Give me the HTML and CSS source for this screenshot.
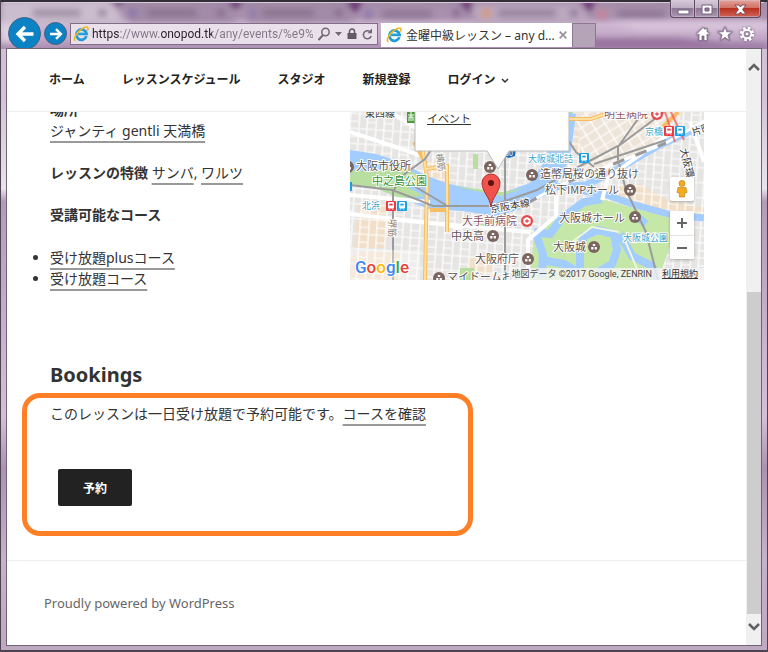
FILE: index.html
```html
<!DOCTYPE html>
<html lang="ja">
<head>
<meta charset="utf-8">
<meta name="viewport" content="width=device-width, initial-scale=1">
<title>金曜中級レッスン – any d...</title>
<link rel="stylesheet" href="styles.css">
</head>
<body>
<svg class="symbols" aria-hidden="true">
  <symbol id="ie" viewBox="0 0 16 16">
    <path d="M13.4 10.2A5.2 5.2 0 1 1 13.6 7.9H5.1" fill="none" stroke="#239bd9" stroke-width="2.7"/>
    <path d="M5 6.6h6.4" stroke="#8bd5f5" stroke-width="1"/>
    <path d="M2.6 14.6C.2 14.5 1.5 9.6 5.5 5.6S14 .2 14.8 1.6c.5.8.2 2-.4 3.1" fill="none" stroke="#f2b71c" stroke-width="1.6"/>
  </symbol>
  <symbol id="train" viewBox="0 0 10 10">
    <rect width="10" height="10" rx="1"/>
    <path d="M2.5 1.5h5v5.5h-5zM3 8.7l1-1.3M7 8.7L6 7.4" fill="#fff" stroke="#fff"/>
    <path d="M3.3 2.7h3.4v1.8H3.3z"/>
  </symbol>
  <symbol id="poi" viewBox="0 0 12 12">
    <circle cx="6" cy="6" r="6" fill="#7b665f"/>
    <path d="M6 2.6v2.6M3.2 6h2.2v2.4H3.2zM6.7 6h2.2v2.4H6.7zM4.8 3h2.4v2H4.8z" fill="#fff"/>
  </symbol>
  <symbol id="hospital" viewBox="0 0 12 12">
    <circle cx="6" cy="6" r="6" fill="#e5484d"/>
    <path d="M6 2l3.6 2v4L6 10 2.4 8V4z" fill="#fff"/>
    <path d="M6 4.2v3.6M4.2 6h3.6" stroke="#e5484d" stroke-width="1.3"/>
  </symbol>
</svg>

<div class="window">
  <svg class="glass" viewBox="0 0 768 49" preserveAspectRatio="none" aria-hidden="true">
    <defs>
      <filter id="soft"><feGaussianBlur stdDeviation="3"/></filter>
      <linearGradient id="glass-fill" x2="0" y2="1">
        <stop offset="0" stop-color="#a48ba9"/><stop offset=".35" stop-color="#ab93b0"/>
        <stop offset=".5" stop-color="#cdb6d0"/><stop offset=".78" stop-color="#c3a9c7"/><stop offset="1" stop-color="#a98db0"/>
      </linearGradient>
    </defs>
    <rect width="768" height="49" fill="url(#glass-fill)"/>
    <g filter="url(#soft)">
      <path d="M0 0h112l12 24H0z" fill="#cbbdce"/>
      <path d="M120 0h108l8 22H130zM240 0h104l10 22H248z" fill="#a28ba7"/>
      <path d="M468 4h112l12 20H478z" fill="#bba7bf"/>
      <path d="M108 0h16l-7 8zM226 0h18l-9 10zM345 0h18l-8 14zM459 0h14l-2 15zM580 0h16l-6 13z" fill="#68336f"/>
      <path d="M32 13h48M146 13h50M262 13h52M382 14h50M498 13h58M618 14h48" stroke="#6f5b76" stroke-width="7" opacity=".5"/>
      <path d="M98 13h7M217 13h7M335 13h7M453 13h7M571 13h7" stroke="#735780" stroke-width="5"/>
      <path d="M128 13h8M250 14h5M365 14h7" stroke="#8873ac" stroke-width="8"/>
      <path d="M482 13h9" stroke="#dc9561" stroke-width="7"/>
      <path d="M598 14h9" stroke="#c98494" stroke-width="9"/>
      <path d="M580 38h100l50 6h38v5H570z" fill="#98729f"/>
      <path d="M640 30h128v-8H610z" fill="#d8c4db"/>
      <path d="M0 24h20v18H0z" fill="#ded2e1"/>
    </g>
    <path d="M0 1h768" stroke="#332d38" stroke-width="2"/>
    <path d="M3 2.500h762" stroke="#d8cbdc"/>
  </svg>

  <header class="chrome">
    <div class="caption">
      <button type="button" aria-label="最小化"><svg viewBox="0 0 24 16"><path d="M7 9h11v4H7z" fill="#fff" stroke="#70617a"/></svg></button>
      <button type="button" aria-label="最大化"><svg viewBox="0 0 24 16"><path d="M7 4h10v9H7zM10 7h4v3h-4z" fill="#fff" fill-rule="evenodd" stroke="#70617a"/></svg></button>
      <button type="button" class="close" aria-label="閉じる"><svg viewBox="0 0 24 16"><path d="M7 4h4l1.500 2L14 4h4l-3.500 4.500L18 13h-4l-1.500-2-1.500 2H7l3.500-4.500z" fill="#fff" stroke="#7b4c52"/></svg></button>
    </div>
    <div class="toolbar">
      <button type="button" class="round back" aria-label="戻る"><svg viewBox="0 0 20 20"><path d="M18.500 10H3.500M10 3L3 10l7 7" fill="none" stroke="#fff" stroke-width="3.400"/></svg></button>
      <button type="button" class="round forward" aria-label="進む"><svg viewBox="0 0 20 20"><path d="M1.500 10h15M10 3l7 7-7 7" fill="none" stroke="#fff" stroke-width="3.400"/></svg></button>
      <div class="address">
        <svg class="ie" aria-hidden="true"><use href="#ie"/></svg>
        <input type="text" aria-label="アドレス" value="https://www.onopod.tk/any/events/%e9%8">
        <button type="button" aria-label="検索"><svg width="12" height="14" viewBox="0 0 12 14"><circle cx="7.500" cy="5" r="3.700" fill="none" stroke="#716878" stroke-width="1.500"/><path d="M5 8l-4.500 5" stroke="#716878" stroke-width="2"/></svg></button>
        <button type="button" aria-label="候補"><svg width="7" height="4" viewBox="0 0 7 4"><path d="M0 0h7L3.500 4z" fill="#716878"/></svg></button>
        <svg width="10" height="12" viewBox="0 0 10 12" role="img" aria-label="安全"><path d="M.5 5h9v6h-9z" fill="#625b67"/><path d="M2.500 6V3.500a2.500 2.500 0 0 1 5 0V6" fill="none" stroke="#625b67" stroke-width="1.500"/></svg>
        <button type="button" aria-label="更新"><svg width="11" height="12" viewBox="0 0 11 12"><path d="M9 5a4 4 0 1 0 .2 3" fill="none" stroke="#716878" stroke-width="1.600"/><path d="M5.500 5.200H10V.5z" fill="#716878"/></svg></button>
      </div>
      <div class="tab">
        <svg class="ie" aria-hidden="true"><use href="#ie"/></svg>
        <span>金曜中級レッスン – any d...</span>
        <button type="button" aria-label="タブを閉じる"><svg width="8" height="8" viewBox="0 0 8 8"><path d="M.7.7l6.600 6.600m0-6.600L.7 7.300" stroke="#96919b" stroke-width="1.700"/></svg></button>
      </div>
      <button type="button" class="new-tab" aria-label="新しいタブ"></button>
      <div class="tools">
        <button type="button" aria-label="ホーム"><svg viewBox="0 0 16 16"><path d="M8 1.500L1.500 8l1 1L4 8v6.500h3V10h2v4.500h3V8l1.500 1 1-1L12 5.500v-3h-2v1z" fill="#fff" stroke="#84718c" stroke-width=".8"/></svg></button>
        <button type="button" aria-label="お気に入り"><svg viewBox="0 0 16 16"><path d="M8 .8l1.800 5h5.400l-4.300 3.300 1.600 5.400L8 11.300l-4.500 3.200 1.600-5.400L.8 5.800h5.400z" fill="#fff" stroke="#84718c" stroke-width=".8"/></svg></button>
        <button type="button" aria-label="ツール"><svg viewBox="0 0 16 16"><circle cx="8" cy="8" r="6" fill="none" stroke="#fff" stroke-width="2.600" stroke-dasharray="2.600 2.112"/><circle cx="8" cy="8" r="4.300" fill="none" stroke="#fff" stroke-width="2"/><circle cx="8" cy="8" r="1.300" fill="#fff"/></svg></button>
      </div>
    </div>
  </header>

  <div class="viewport">
    <div class="page">
      <nav class="menu" aria-label="メニュー">
        <a href="#">ホーム</a>
        <a href="#">レッスンスケジュール</a>
        <a href="#">スタジオ</a>
        <a href="#">新規登録</a>
        <a href="#">ログイン <svg width="8" height="6" viewBox="0 0 8 6" aria-hidden="true"><path d="M1 1l3 3 3-3" fill="none" stroke="#333" stroke-width="1.500"/></svg></a>
      </nav>

      <main>
        <section class="event">
          <div class="details">
            <p><strong>場所</strong><br><a href="#">ジャンティ gentli 天満橋</a></p>
            <p><strong>レッスンの特徴</strong> <a href="#">サンバ</a>, <a href="#">ワルツ</a></p>
            <p><strong>受講可能なコース</strong></p>
            <ul>
              <li><a href="#">受け放題plusコース</a></li>
              <li><a href="#">受け放題コース</a></li>
            </ul>
          </div>
          <div class="map">
            <svg class="map-art" viewBox="0 0 354 168" role="img" aria-label="地図">
              <defs>
                <pattern id="streets" width="17" height="15" patternUnits="userSpaceOnUse" patternTransform="rotate(4)">
                  <path d="M0 1h17M1 0v15M10 1v14M0 9h10" stroke="#fff" stroke-width="1.200" fill="none"/>
                </pattern>
                <pattern id="diagonals" width="11" height="9" patternUnits="userSpaceOnUse" patternTransform="rotate(-32)">
                  <path d="M0 1h11M1 0v9" stroke="#fff" stroke-width="1.200"/>
                </pattern>
              </defs>
              <rect width="354" height="168" fill="#e6e5e4"/>
              <path d="M8 92h28v44H4zM10 140h42v28H0v-22zM80 50h16v24H80zM118 146h24v16h-24z" fill="#f1dfc9"/>
              <path d="M228 0h98l-6 26-60 28-22 10-14-30z" fill="#f1dfc9"/>
              <path d="M244 76l46-4 28 16 36 8v14l-80-18z" fill="#f1dfc9"/>
              <rect width="354" height="168" fill="url(#streets)"/>
              <path d="M224 0h110l-18 30-80 34z" fill="#eee5da"/>
              <path d="M224 0h110l-18 30-80 34z" fill="url(#diagonals)"/>
              <path d="M123 42h5v15h-5zM110 156h14v12h-14zM126 112h10v6h-10zM218 0h5v26h-5z" fill="#b9dfa0"/>

              <path d="M0 38l26 4 25 8 24 13 24 9 51 10 30-11 14-21 8-25 14-25 10 2-6 44-14 27-31 23-29 8-35-5-32-2-21-8-30-12-30-16-28-5z" fill="#a3ccff"/>
              <path d="M0 62l24 1 26 8 24 13-24 2-28-11-22-3zM0 58l25 2 24-6 22 10 3 12-18-6-26-2-30-7zM102 74l49 10 23-8-22 4z" fill="#b9dfa0"/>
              <path d="M180 87l24-12 32-2 25-12 47-27 46-21M226 78l28 4 28 10 36 10 36 4" fill="none" stroke="#a3ccff" stroke-width="7"/>
              <path d="M180 168l4-46 22-16 22-16 16-5 32 9 44 12v28l-12 34z" fill="#c5e7a8"/>
              <path d="M184 120l16 2 12-16 22-16 18-3M186 122l7 20-1 24M192 148l22 4 14 8M230 156v-20l4-12 14-6 16 4 3 16-5 14-14 8M270 122l12 22 20 10 5 14M286 104l10 8" fill="none" stroke="#a3ccff" stroke-width="8"/>
              <path d="M222 130l20-15 27 5M290 164l-16-38" fill="none" stroke="#eff6dc" stroke-width="2"/>

              <path d="M0 102l90 10 22 4M92 112l88 8M206 84v20l-28 24v40M0 20l70 23M0 83l80 7M340 10l14 40M40 0l52 32M252 88l6-22 58-42" fill="none" stroke="#fff" stroke-width="4"/>
              <path d="M73 40l4 26-2 102M76 57l21-3v66M64 30l12 22M80 98h16M219 7h22l26-9M328 0l-16 16M73 0v40" fill="none" stroke="#f6bd64" stroke-width="4"/>
              <path d="M73 40l4 26-2 102M76 57l21-3v66M219 7h22l26-9M73 0v40" fill="none" stroke="#fde1a1" stroke-width="2"/>
              <path d="M0 73l42 5 24 9 17 7h58l46-16 43-24 40-21 44-33M64 74l32 19M48 67l27-20 10-15M43 168V80l7-14M155 168V39M268 50V35l25-35M218 28l8 12 18 15M268 48l8 30 20 42 12 48M244 52l72-24" fill="none" stroke="#9b9b9b" stroke-width="2"/>
              <path d="M176 92l32-18 58-23 50-20 38-22" fill="none" stroke="#fff" stroke-width="3"/>
              <path d="M176 92l32-18 58-23 50-20" fill="none" stroke="#999" stroke-width="3" stroke-dasharray="12 12"/>
              <path d="M315 0l10 30M321 0l13 28" stroke="#ee5058" stroke-width="2" opacity=".7"/>

              <g class="place">
                <text x="6" y="58">大阪市役所</text><text x="101" y="128">中央高</text><text x="125" y="151">大阪府庁</text>
                <text x="97" y="169">マイドームお</text><text x="190" y="66">造幣局桜の通り抜け</text><text x="195" y="82">松下IMPホール</text>
                <text x="209" y="110">大阪城ホール</text><text x="203" y="139">大阪城</text>
                <text x="112" y="113" class="medical">大手前病院</text><text x="254" y="6" class="medical">明生病院</text>
                <text x="22" y="73" class="park">中之島公園</text>
              </g>
              <g class="station">
                <text x="12" y="97">北浜</text><text x="178" y="50">大阪城北詰</text><text x="273" y="129">大阪城公園</text><text x="295" y="23">京橋</text>
              </g>
              <g class="rail">
                <text x="15" y="5">東西線</text>
                <text transform="translate(141 101) rotate(-10)">京阪本線</text>
                <text transform="translate(330 37) rotate(76)">大阪環</text>
                <text transform="translate(343 24) rotate(-18)">片町</text>
                <text transform="translate(86 42) rotate(80)" class="road">横筋</text>
                <text transform="translate(39 107) rotate(90)" class="road">堺筋</text>
              </g>
              <use href="#train" x="36" y="89" width="10" height="10" fill="#ed3944"/>
              <use href="#train" x="47" y="89" width="10" height="10" fill="#1aa0e4"/>
              <use href="#train" x="229" y="41" width="10" height="10" fill="#1aa0e4"/>
              <use href="#train" x="314" y="14" width="10" height="10" fill="#ed3944"/>
              <use href="#train" x="325" y="14" width="10" height="10" fill="#1aa0e4"/>
              <path d="M0 70h2v9H0z" fill="#1aa0e4"/>
              <rect x="57" width="8" height="11" fill="#499c36"/><path d="M58 3h6M61 0v9M59 9V5h4v4" stroke="#fff" fill="none"/>
              <use href="#hospital" x="171" y="103" width="12" height="12"/>
              <use href="#hospital" x="301" y="-4" width="12" height="12"/>
              <use href="#poi" x="-8" y="49" width="12" height="12"/>
              <use href="#poi" x="134" y="49" width="12" height="12"/>
              <use href="#poi" x="176" y="57" width="12" height="12"/>
              <use href="#poi" x="274" y="72" width="12" height="12"/>
              <use href="#poi" x="279" y="99" width="12" height="12"/>
              <use href="#poi" x="238" y="129" width="12" height="12"/>
              <use href="#poi" x="137" y="118" width="12" height="12"/>
              <use href="#poi" x="172" y="141" width="12" height="12"/>
              <use href="#poi" x="83" y="160" width="12" height="12"/>
              <path d="M152 36h14l-1 8-6 2-6-2z" fill="#1b6fb7"/><text x="155" y="44" class="route">30</text>
              <path d="M65-5h154v44h-60l-11 18-11-18H65z" class="bubble"/>
              <path d="M141 95c-1-10-9-15-9-24a9 9 0 0 1 18 0c0 9-8 14-9 24z" fill="#ef534c" stroke="#ac302c"/>
              <circle cx="141" cy="71" r="3" fill="#5d1413"/>
              <path d="M0 138h70v30H0z" fill="#fff" opacity=".35"/>
              <text x="5" y="161" class="google"><tspan fill="#4285f4">G</tspan><tspan fill="#ea4335">o</tspan><tspan fill="#fbbc05">o</tspan><tspan fill="#4285f4">g</tspan><tspan fill="#34a853">l</tspan><tspan fill="#ea4335">e</tspan></text>
            </svg>
            <a class="map-event" href="#">イベント</a>
            <div class="map-controls">
              <button type="button" aria-label="ストリートビュー"><svg width="12" height="18" viewBox="0 0 12 18"><circle cx="6" cy="3.500" r="3" fill="#f6ad1b" stroke="#b87416" stroke-width=".6"/><path d="M2 7.500h8l1 5H9l-.5 4.500h-5L3 12.500H1z" fill="#f6ad1b" stroke="#b87416" stroke-width=".6"/></svg></button>
              <div class="zoom">
                <button type="button" aria-label="拡大"><svg width="10" height="10" viewBox="0 0 10 10"><path d="M5 0v10M0 5h10" stroke="#666" stroke-width="2"/></svg></button>
                <button type="button" aria-label="縮小"><svg width="10" height="10" viewBox="0 0 10 10"><path d="M0 5h10" stroke="#666" stroke-width="2"/></svg></button>
              </div>
            </div>
            <div class="credit"><span>地図データ ©2017 Google, ZENRIN</span><a href="#">利用規約</a></div>
          </div>
        </section>

        <h2>Bookings</h2>
        <section class="booking">
          <p>このレッスンは一日受け放題で予約可能です。<a href="#">コースを確認</a></p>
          <button type="button">予約</button>
        </section>
      </main>

      <footer><a href="#">Proudly powered by WordPress</a></footer>
    </div>

    <div class="scrollbar">
      <button type="button" class="up" aria-label="上へ"><svg width="12" height="9" viewBox="0 0 12 9"><path d="M1 7l5-5 5 5" fill="none" stroke="#606060" stroke-width="2.500"/></svg></button>
      <div class="track"></div>
      <div class="thumb"></div>
      <button type="button" class="down" aria-label="下へ"><svg width="12" height="9" viewBox="0 0 12 9"><path d="M1 2l5 5 5-5" fill="none" stroke="#606060" stroke-width="2.500"/></svg></button>
    </div>
  </div>
</div>
</body>
</html>
```
FILE: styles.css
```css
* { box-sizing: border-box; }

body {
  margin: 0;
  color: #333;
  font: 14px/21px "Noto Sans", "Noto Sans CJK JP", sans-serif;
}

button {
  display: flex;
  align-items: center;
  justify-content: center;
  padding: 0;
  border: 0;
  background: none;
  font-family: inherit;
}

p, h2, ul { margin: 0; }
.symbols { position: absolute; width: 0; height: 0; }

/* Window frame */
.window {
  position: relative;
  display: flex;
  flex-direction: column;
  min-height: 100vh;
  padding: 0 6px 5px;
  border: solid #4c4451;
  border-width: 0 1px 2px;
  background: linear-gradient(#cdbed1 0, #d2c3d5 15%, #eae3ec 29%, #b49ab6 31%, #c5aeca 48%, #d5bfd7 64%, #ae91b1 72%, #c5b1c9 86%, #bea9c1);
}
.glass { position: absolute; top: 0; left: 0; width: 100%; height: 49px; }
.chrome { position: relative; }

.caption { display: flex; justify-content: flex-end; height: 23px; }
.caption button {
  width: 24px;
  height: 18px;
  border: 1px solid #5b4c62;
  border-top: 0;
  border-right: 0;
  background: linear-gradient(#d7cad9, #bfadc3 48%, #8e7795 50%, #ac97b1);
  box-shadow: inset 0 0 0 1px #d8c7dc80;
}
.caption button:first-child { border-radius: 0 0 0 4px; }
.caption svg { flex: none; width: 24px; height: 16px; }
.caption .close {
  width: 43px;
  border-right: 1px solid #5b3740;
  border-radius: 0 0 4px 0;
  background: linear-gradient(#e4a49a, #cf6f62 48%, #b9301e 50%, #cf6557);
}

.toolbar { display: flex; align-items: flex-start; height: 26px; }
.round {
  flex: none;
  border: 1px solid #465f80;
  border-radius: 50%;
  background: #0a82c4;
}
.back { width: 33px; height: 33px; margin: -6px 0 0 1px; }
.back svg { width: 20px; height: 20px; }
.forward { width: 23px; height: 23px; margin: -1px 3px 0; }
.forward svg { width: 14px; height: 14px; }

.address {
  display: flex;
  flex: 0 1 308px;
  align-items: center;
  gap: 5px;
  min-width: 0;
  height: 22px;
  padding: 0 4px 0 2px;
  border: 1px solid #806e86;
  background: #e9e0eb;
}
.ie { flex: none; width: 16px; height: 16px; }
.address input {
  flex: 1;
  min-width: 0;
  height: 20px;
  margin-left: -2px;
  padding: 0;
  border: 0;
  color: transparent;
  font: 12px/20px "Roboto", sans-serif;
  background: linear-gradient(90deg, #25202a 0 28px, #807687 28px 69px, #25202a 69px 120px, #807687 120px);
  background-clip: text;
}

.tab {
  display: flex;
  flex: 0 0 176px;
  align-items: center;
  gap: 4px;
  height: 24px;
  margin-left: 3px;
  padding: 0 5px;
  background: #fff;
  font-size: 12px;
  white-space: nowrap;
}
.tab span { flex: 1; }
.new-tab {
  width: 24px;
  height: 24px;
  border: 1px solid #8c7892;
  border-bottom: 0;
  background: #b5a3b8;
}
.tools { display: flex; gap: 6px; align-items: center; height: 22px; margin-left: auto; padding-right: 6px; }
.tools svg { width: 16px; height: 16px; filter: drop-shadow(0 0 1px #5f4d68); }

.viewport {
  position: relative;
  display: flex;
  flex: 1;
  outline: 1px solid #716378;
  background: #fff;
}
.page { display: flex; flex: 1; flex-direction: column; min-width: 0; }

/* Site menu */
.menu {
  display: flex;
  align-items: center;
  gap: 37px;
  height: 63px;
  padding: 0 42px 2px;
  border-bottom: 1px solid #eee;
  font-size: 12px;
  font-weight: 700;
}
.menu a { color: #222; text-decoration: none; white-space: nowrap; }
.menu svg { margin-left: 2px; }

/* Event */
main { padding-left: 15px; }
.event {
  display: flex;
  justify-content: space-between;
  padding: 0 42px 0 28px;
  overflow: hidden;
}
.details { margin-top: -13px; }
.details p { margin-bottom: 21px; }
.details a, .booking a {
  color: #333;
  text-decoration: underline 2px #999;
  text-decoration-skip-ink: none;
  text-underline-offset: 5px;
}
ul { padding: 1px 0 6px; }

/* Map */
.map { position: relative; flex: none; width: 354px; height: 168px; overflow: hidden; }
.map-art { display: block; width: 100%; height: 100%; font-family: "Noto Sans CJK JP", sans-serif; }
.map-art text { paint-order: stroke; stroke: #fff; stroke-width: 2px; stroke-linejoin: round; }
.place { fill: #5c5350; font-size: 11px; }
.place .medical { fill: #8b5560; }
.place .park { fill: #35902e; }
.station { fill: #3ba3cc; font-size: 9px; }
.rail { fill: #3c3c3c; font-size: 10px; }
.rail .road { fill: #8d8478; font-size: 9px; }
.map-art .route { fill: #fff; font-size: 7px; stroke: none; }
.bubble { fill: #fff; stroke: #bbb; }
.google { font: 500 17px "Roboto", sans-serif; }
.map-event {
  position: absolute;
  top: -2px;
  left: 77px;
  color: #333;
  font-size: 11px;
  line-height: 18px;
}
.map-controls { position: absolute; top: 65px; right: 10px; display: grid; gap: 10px; }
.map-controls button { width: 24px; height: 24px; background: #fff; }
.map-controls > button, .zoom { border-radius: 2px; background: #fff; box-shadow: 0 1px 3px #0004; }
.zoom button + button { border-top: 1px solid #e5e5e5; }
.credit {
  position: absolute;
  right: 0;
  bottom: 0;
  display: flex;
  gap: 10px;
  padding: 0 6px 0 2px;
  color: #444;
  background: #f5f5f5cc;
  font: 9px/12px "Roboto", "Noto Sans CJK JP", sans-serif;
}
.credit a { color: #333; }

/* Bookings */
h2 {
  margin: 65px 0 3px 28px;
  font-size: 20px;
  line-height: 30px;
}
.booking {
  max-width: 451px;
  padding: 5px 22px 25px 23px;
  border: 5px solid #ff7f27;
  border-radius: 18px;
}
.booking button {
  width: 74px;
  height: 37px;
  margin: 45px 0 0 8px;
  border-radius: 2px;
  color: #fff;
  background: #222;
  font-size: 12px;
  font-weight: 700;
}

footer {
  flex: 1;
  margin-top: 24px;
  padding: 32px 37px 24px;
  border-top: 1px solid #eee;
  font-size: 13px;
}
footer a { color: #666; text-decoration: none; }

/* Scrollbar */
.scrollbar { display: flex; flex: none; flex-direction: column; width: 15px; background: #f0f0f0; }
.up { height: 36px; }
.down { height: 31px; padding-bottom: 6px; }
.track { flex: 207; }
.thumb { flex: 322; margin-left: 1px; background: #cdcdcd; }
```
